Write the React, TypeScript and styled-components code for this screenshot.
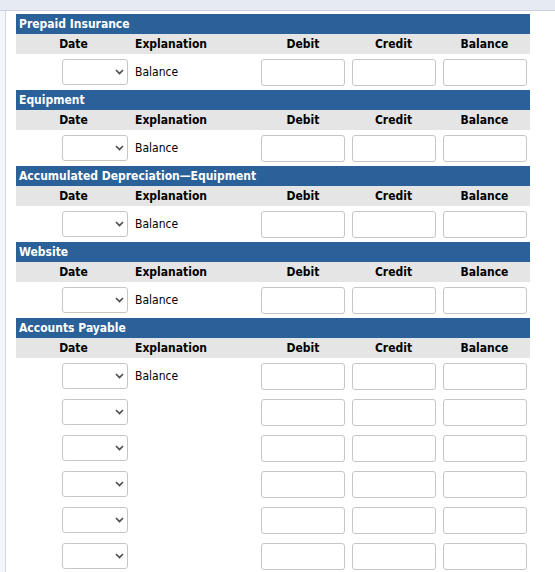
import React from "react";
import styled, { createGlobalStyle } from "styled-components";

const GlobalStyle = createGlobalStyle`
  html, body {
    margin: 0;
    padding: 0;
    background: #ffffff;
  }
  body {
    font-family: "DejaVu Sans Condensed", "DejaVu Sans", sans-serif;
    font-size: 12px;
    color: #000;
  }
`;

const TopBar = styled.div`
  height: 10px;
  background: #e6eaf3;
  border-bottom: 1px solid #c9d1de;
`;

const Frame = styled.div`
  display: flex;
  min-height: 561px;
`;

const SideStrip = styled.div`
  width: 5px;
  background: #f3f6fb;
  border-right: 1px solid #d0d8e4;
`;

const Content = styled.div`
  flex: 1;
  padding: 3px 0 0 10px;
`;

const Ledger = styled.div`
  width: 514px;
`;

const Title = styled.div`
  height: 20px;
  line-height: 20px;
  background: #2a6198;
  color: #ffffff;
  font-weight: bold;
  padding-left: 3px;
`;

const Grid = styled.div`
  display: grid;
  grid-template-columns: 115px 127px 90px 91px 91px;
`;

const HeadRow = styled(Grid)`
  height: 20px;
  background: #e5e5e5;
  font-weight: bold;
`;

const HeadCell = styled.div<{ $left?: boolean }>`
  line-height: 20px;
  text-align: ${(p) => (p.$left ? "left" : "center")};
  padding-left: ${(p) => (p.$left ? "4px" : "0")};
`;

const Row = styled(Grid)`
  height: 36px;
  align-items: center;
`;

const DateCell = styled.div`
  display: flex;
  justify-content: flex-end;
  padding-right: 3px;
`;

const SelectWrap = styled.div`
  position: relative;
  width: 66px;
  height: 26px;
`;

const Select = styled.select`
  appearance: none;
  width: 100%;
  height: 100%;
  box-sizing: border-box;
  border: 1px solid #c6c6c6;
  border-radius: 3px;
  background: #ffffff;
  font: inherit;
  outline: none;
`;

const Chevron = styled.svg`
  position: absolute;
  right: 4px;
  top: 10px;
  pointer-events: none;
`;

const ExplCell = styled.div`
  padding-left: 4px;
`;

const AmountCell = styled.div`
  display: flex;
  justify-content: center;
`;

const Input = styled.input`
  width: 84px;
  height: 27px;
  box-sizing: border-box;
  border: 1px solid #c6c6c6;
  border-radius: 3px;
  background: #ffffff;
  outline: none;
  font: inherit;
`;

const accounts = [
  { name: "Prepaid Insurance", rows: 1 },
  { name: "Equipment", rows: 1 },
  { name: "Accumulated Depreciation\u2014Equipment", rows: 1 },
  { name: "Website", rows: 1 },
  { name: "Accounts Payable", rows: 6 },
];

const DateSelect: React.FC = () => (
  <DateCell>
    <SelectWrap>
      <Select defaultValue="">
        <option value=""></option>
      </Select>
      <Chevron width="9" height="6" viewBox="0 0 9 6">
        <path d="M1 1 L4.5 4.5 L8 1" fill="none" stroke="#4a4a4a" strokeWidth="1.6" />
      </Chevron>
    </SelectWrap>
  </DateCell>
);

const Account: React.FC<{ name: string; rows: number }> = ({ name, rows }) => (
  <Ledger>
    <Title>{name}</Title>
    <HeadRow>
      <HeadCell>Date</HeadCell>
      <HeadCell $left>Explanation</HeadCell>
      <HeadCell>Debit</HeadCell>
      <HeadCell>Credit</HeadCell>
      <HeadCell>Balance</HeadCell>
    </HeadRow>
    {Array.from({ length: rows }).map((_, i) => (
      <Row key={i}>
        <DateSelect />
        <ExplCell>{i === 0 ? "Balance" : ""}</ExplCell>
        <AmountCell>
          <Input type="text" />
        </AmountCell>
        <AmountCell>
          <Input type="text" />
        </AmountCell>
        <AmountCell>
          <Input type="text" />
        </AmountCell>
      </Row>
    ))}
  </Ledger>
);

const App: React.FC = () => (
  <>
    <GlobalStyle />
    <TopBar />
    <Frame>
      <SideStrip />
      <Content>
        {accounts.map((a) => (
          <Account key={a.name} name={a.name} rows={a.rows} />
        ))}
      </Content>
    </Frame>
  </>
);

export default App;
